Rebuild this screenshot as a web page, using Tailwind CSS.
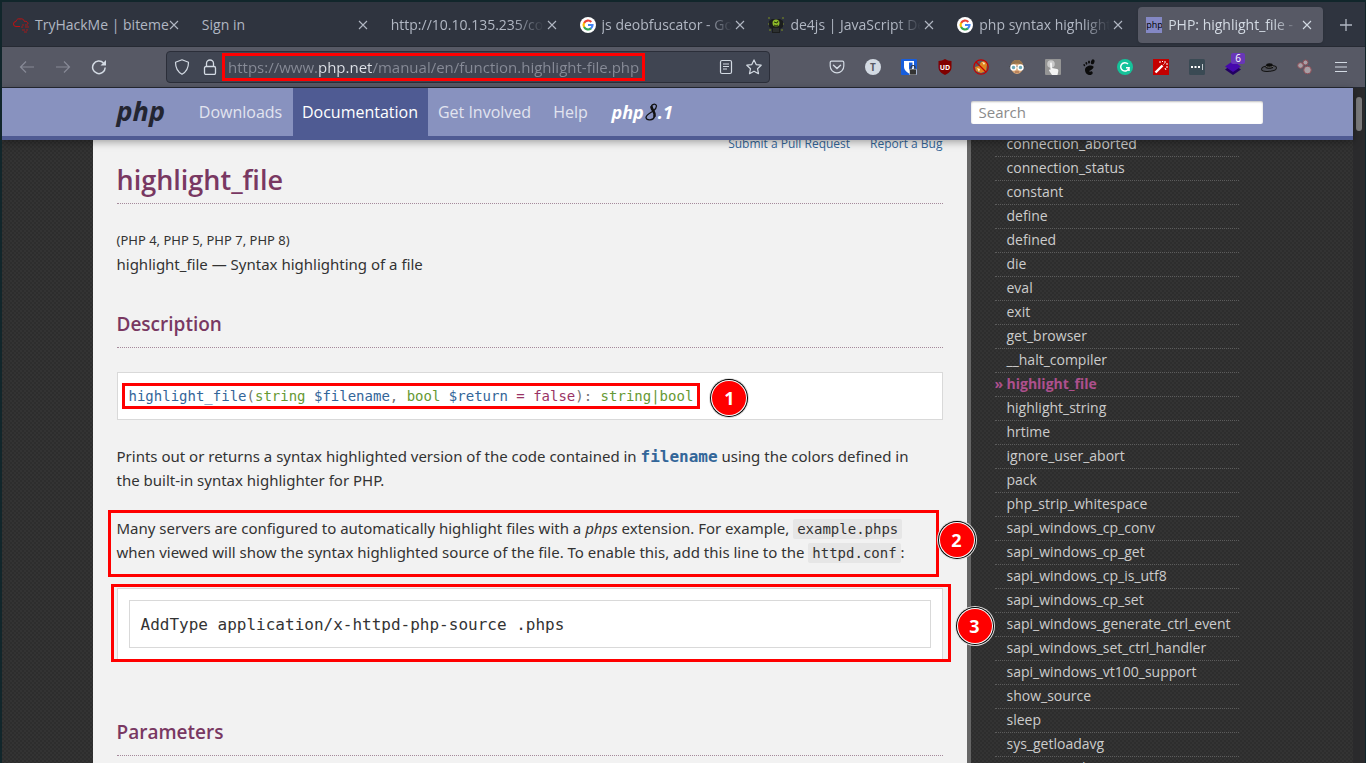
<!DOCTYPE html>
<html lang="en">
<head>
<meta charset="utf-8">
<title>PHP: highlight_file - Manual</title>
<script src="https://cdn.jsdelivr.net/npm/@tailwindcss/browser@4"></script>
</head>
<body class="h-screen overflow-hidden bg-[#11262b] pl-[2px] pt-[2px] pr-px font-['Open_Sans','Noto_Sans',sans-serif]">
<svg class="hidden">
  <symbol id="x" viewBox="0 0 12 12"><path d="M2 2l8 8M10 2l-8 8" stroke="currentColor" stroke-width="1.1" fill="none"/></symbol>
  <symbol id="g" viewBox="0 0 16 16"><circle cx="8" cy="8" r="8" fill="#fff"/><g fill="none" stroke-width="2.2"><path d="M4.1 5.9A4.5 4.5 0 0 1 11.3 4.9" stroke="#ea4335"/><path d="M4.2 10.3A4.5 4.5 0 0 1 4.2 5.7" stroke="#fbbc05"/><path d="M11 11.4A4.5 4.5 0 0 1 4.1 10.1" stroke="#34a853"/><path d="M8 8h4.5A4.5 4.5 0 0 1 10.8 11.5" stroke="#4285f4"/></g></symbol>
</svg>
<div class="flex h-full flex-col overflow-hidden bg-[#2f343f]">

  <!-- Tab strip -->
  <div class="flex h-11 shrink-0 items-center gap-1 pl-[3px] pt-px text-sm text-[#b1b7c3]">
    <div class="flex h-9 min-w-0 flex-1 items-center gap-1.5 px-2">
      <svg class="size-4 shrink-0" viewBox="0 0 16 16" fill="none" stroke="#c11111"><path d="M7 9.500H3a2.500 2.500 0 0 1 0-5A3 3 0 0 1 7 2a3.500 3.500 0 0 1 4.500 2.500A2.500 2.500 0 0 1 15 7"/><path d="M9 8h2M12 8h3M8 10h2M12 10h4M9 13h3M13 13h2M11 15h3" stroke-width=".8"/></svg>
      <span class="min-w-0 flex-1 whitespace-nowrap">TryHackMe | biteme</span>
      <button class="grid size-4 shrink-0 place-items-center" aria-label="Close tab"><svg class="size-3"><use href="#x"/></svg></button>
    </div>
    <div class="flex h-9 min-w-0 flex-1 items-center gap-1.5 px-2">
      <span class="min-w-0 flex-1 whitespace-nowrap">Sign in</span>
      <button class="grid size-4 shrink-0 place-items-center" aria-label="Close tab"><svg class="size-3"><use href="#x"/></svg></button>
    </div>
    <div class="flex h-9 min-w-0 flex-1 items-center px-2">
      <span class="min-w-0 flex-1 overflow-hidden whitespace-nowrap mask-r-from-80% mask-r-to-100%">http://10.10.135.235/con</span>
      <button class="grid size-4 shrink-0 place-items-center" aria-label="Close tab"><svg class="size-3"><use href="#x"/></svg></button>
    </div>
    <div class="flex h-9 min-w-0 flex-1 items-center px-2">
      <svg class="mr-1.5 size-4 shrink-0"><use href="#g"/></svg>
      <span class="min-w-0 flex-1 overflow-hidden whitespace-nowrap mask-r-from-80% mask-r-to-100%">js deobfuscator - Go</span>
      <button class="grid size-4 shrink-0 place-items-center" aria-label="Close tab"><svg class="size-3"><use href="#x"/></svg></button>
    </div>
    <div class="flex h-9 min-w-0 flex-1 items-center px-2">
      <svg class="mr-1.5 size-4 shrink-0" viewBox="0 0 16 16"><path d="M1 4l3-2h8l3 2v6l-3 2v4H4v-4l-3-2z" fill="#1b1d1d"/><circle cx="8" cy="6" r="3.500" fill="#8db92a"/><path d="M6 5l3 1 1-2M6 8l2 1 2-1" stroke="#26330b" fill="none"/><path d="M0 1h2M14 1h2M0 7h1M15 7h1M1 13h2M13 13h2" stroke="#7c8f22"/><path d="M6 11v4M8 11v4M10 11v4" stroke="#3f4343"/></svg>
      <span class="min-w-0 flex-1 overflow-hidden whitespace-nowrap mask-r-from-80% mask-r-to-100%">de4js | JavaScript De</span>
      <button class="grid size-4 shrink-0 place-items-center" aria-label="Close tab"><svg class="size-3"><use href="#x"/></svg></button>
    </div>
    <div class="flex h-9 min-w-0 flex-1 items-center px-2">
      <svg class="mr-1.5 size-4 shrink-0"><use href="#g"/></svg>
      <span class="min-w-0 flex-1 overflow-hidden whitespace-nowrap mask-r-from-80% mask-r-to-100%">php syntax highlight</span>
      <button class="grid size-4 shrink-0 place-items-center" aria-label="Close tab"><svg class="size-3"><use href="#x"/></svg></button>
    </div>
    <div class="flex h-9 min-w-0 flex-1 items-center rounded bg-[#575965] px-2 text-[#d3dae3] shadow">
      <span class="mr-1.5 grid size-4 shrink-0 place-items-center overflow-hidden bg-[#8488c4] text-[9px] leading-none text-black">php</span>
      <span class="min-w-0 flex-1 overflow-hidden whitespace-nowrap mask-r-from-80% mask-r-to-100%">PHP: highlight_file -</span>
      <button class="grid size-4 shrink-0 place-items-center" aria-label="Close tab"><svg class="size-3"><use href="#x"/></svg></button>
    </div>
    <button class="grid h-9 w-[38px] shrink-0 place-items-center" aria-label="New tab"><svg class="size-3" viewBox="0 0 12 12"><path d="M6 0v12M0 6h12" stroke="currentColor" stroke-width="1.300"/></svg></button>
  </div>

  <!-- Toolbar -->
  <div class="flex h-[42px] shrink-0 items-center border-y border-[#262a33] bg-[#575965] pl-[7px] pr-1.5 text-[#d3dae3]">
    <button class="grid h-9 w-9 shrink-0 place-items-center text-[#878a96]" aria-label="Back"><svg class="size-4" viewBox="0 0 16 16" fill="none" stroke="currentColor" stroke-width="1.200"><path d="M15 8H1.500M7 2.500L1.500 8 7 13.500"/></svg></button>
    <button class="grid h-9 w-9 shrink-0 place-items-center text-[#878a96]" aria-label="Forward"><svg class="size-4" viewBox="0 0 16 16" fill="none" stroke="currentColor" stroke-width="1.200"><path d="M1 8h13.500M9 2.500L14.500 8 9 13.500"/></svg></button>
    <button class="grid h-9 w-9 shrink-0 place-items-center" aria-label="Reload"><svg class="size-4" viewBox="0 0 16 16" fill="none" stroke="currentColor" stroke-width="1.500"><path d="M14.200 8.500A6.300 6.300 0 1 1 12.500 4"/><path d="M15 1v5.500H9.500z" fill="currentColor" stroke="none"/></svg></button>
    <div class="mx-[49px] flex h-8 flex-1 items-center rounded border border-[#2b2e39] bg-[#404552] pr-px">
      <svg class="ml-[7px] size-4 shrink-0" viewBox="0 0 16 16" fill="none" stroke="currentColor" stroke-width="1.200"><path d="M8 .8l6.500 2.500c0 6-2 9.500-6.500 12-4.500-2.500-6.500-6-6.500-12z" stroke-linejoin="round"/></svg>
      <svg class="ml-3 size-4 shrink-0" viewBox="0 0 16 16" fill="none" stroke="currentColor" stroke-width="1.300"><rect x="2.500" y="7.500" width="11" height="8" rx="1.500"/><path d="M4.500 7.500V4.500a3.500 3.500 0 0 1 7 0v3"/></svg>
      <div class="ml-1 h-7 w-[423px] shrink-0 border-3 border-[#f00] pl-[3px]">
        <input aria-label="Address" value="https://www.php.net/manual/en/function.highlight-file.php" class="block h-full w-full bg-[linear-gradient(to_right,#878b97_90px,#e0e4ea_90px,#e0e4ea_144px,#878b97_144px)] bg-clip-text text-[15px] text-transparent outline-none">
      </div>
      <span class="flex-1"></span>
      <button class="grid size-7 place-items-center" aria-label="Reader view"><svg class="size-4" viewBox="0 0 16 16" fill="none" stroke="currentColor" stroke-width="1.200"><rect x="2.500" y="1.500" width="11" height="13" rx="1.500"/><path d="M5 5h6M5 7.500h6M5 10h4"/></svg></button>
      <button class="grid size-7 place-items-center" aria-label="Bookmark"><svg class="size-4" viewBox="0 0 16 16" fill="none" stroke="currentColor" stroke-width="1.200" stroke-linejoin="round"><path d="M8 .9l2.200 4.700 5 .6-3.700 3.500 1 5L8 12.200l-4.500 2.500 1-5L.8 6.200l5-.6z"/></svg></button>
    </div>
    <button class="grid h-9 w-9 shrink-0 place-items-center" aria-label="Pocket"><svg class="size-4" viewBox="0 0 16 16" fill="none" stroke="currentColor" stroke-width="1.200"><path d="M2.500 2.200h11c.8 0 1.300.5 1.300 1.300V7a6.800 6.800 0 0 1-13.600 0V3.500c0-.8.500-1.300 1.300-1.300z"/><path d="M4.500 6.200L8 9.500l3.500-3.300" stroke-width="1.500" stroke-linecap="round"/></svg></button>
    <button class="grid h-9 w-9 shrink-0 place-items-center" aria-label="Account"><span class="grid size-4 place-items-center rounded-full bg-[#d3dae3] text-[10px] font-bold leading-none text-[#575965]">T</span></button>
    <button class="grid h-9 w-9 shrink-0 place-items-center" aria-label="Bitwarden"><svg class="size-4" viewBox="0 0 16 16"><rect width="16" height="16" rx="1" fill="#175ddc"/><path d="M3 2h10v6c0 3-2.500 5-5 6.500C5.500 13 3 11 3 8z" fill="#fff"/><path d="M8 3.500h3.500V8c0 1.500-1.500 3-3.500 4z" fill="#175ddc"/><rect x="8.500" y="10" width="7" height="6" rx="1" fill="#333" stroke="#fff" stroke-width=".6"/><path d="M10 10V8.500a2 2 0 0 1 4 0V10" fill="none" stroke="#333" stroke-width="1.200"/></svg></button>
    <button class="grid h-9 w-9 shrink-0 place-items-center" aria-label="uBlock Origin"><span class="relative grid size-4 place-items-center"><svg class="absolute size-4" viewBox="0 0 16 16"><path d="M8 0c2 1.300 4 2 6.500 2v6c0 4-2.500 6-6.500 8-4-2-6.500-4-6.500-8V2C4 2 6 1.300 8 0z" fill="#800000"/></svg><span class="relative text-[7px] font-bold leading-none text-white">UD</span></span></button>
    <button class="grid h-9 w-9 shrink-0 place-items-center" aria-label="Cookie blocker"><svg class="size-4" viewBox="0 0 16 16"><path d="M2 8l4-1 2-4 4-1 2 3-1 7-5 2-5-2z" fill="#e0861f"/><path d="M9 3l3 1-1 2zM4 9l3 1-1 3z" fill="#fff0cf"/><circle cx="8" cy="8" r="7.200" fill="none" stroke="#c50000" stroke-width="1.200"/><path d="M3 3l10 10" stroke="#c50000" stroke-width="1.200"/></svg></button>
    <button class="grid h-9 w-9 shrink-0 place-items-center" aria-label="User agent"><svg class="size-4" viewBox="0 0 16 16"><path d="M2 8c0-4 2-7 6-7s6 3 6 7-3 7-6 7-6-3-6-7z" fill="#d9a878"/><path d="M2 6.500C2 3 5 1 8 1s6 2 6 5.500C11 4 5 4 2 6.500z" fill="#95734c"/><path d="M0 7.500h16" stroke="#4b4b4b"/><circle cx="4.500" cy="8.500" r="2.500" fill="#6fa9b8" stroke="#fff" stroke-width="1.500"/><circle cx="11.500" cy="8.500" r="2.500" fill="#6fa9b8" stroke="#fff" stroke-width="1.500"/><path d="M6 13h4" stroke="#9b5f42"/></svg></button>
    <button class="grid h-9 w-9 shrink-0 place-items-center" aria-label="Click to play"><svg class="size-4" viewBox="0 0 16 16"><rect width="16" height="16" rx="1" fill="#959595"/><circle cx="6" cy="5" r="3.800" fill="#c9c9c9"/><path d="M5 4.500c0-1.500 2-1.500 2 0V9l5 1c1 .2 1.500 1 1.300 2l-.8 4H7L4 11.500c0-1 1-1.200 1.500-.5z" fill="#f4f4f4"/></svg></button>
    <button class="grid h-9 w-9 shrink-0 place-items-center" aria-label="GNOME extensions"><svg class="size-4" viewBox="0 0 16 16" fill="#0b0b0b"><ellipse cx="11.700" cy="2.800" rx="1.700" ry="2.500" transform="rotate(20 11.700 2.800)"/><ellipse cx="8" cy="3" rx="1" ry="1.600"/><ellipse cx="5.400" cy="4.300" rx=".9" ry="1.400" transform="rotate(-15 5.400 4.300)"/><ellipse cx="3.300" cy="6.200" rx=".8" ry="1.200" transform="rotate(-25 3.300 6.200)"/><path d="M12.500 7.500C10 5.500 4 7 4 11c0 3 2.500 5 5 5s3.500-2.500 2-3.500c-1-.7-1.500.5-2.500 0-1.500-1 4.500-1.500 4-5z"/></svg></button>
    <button class="grid h-9 w-9 shrink-0 place-items-center" aria-label="Grammarly"><svg class="size-4" viewBox="0 0 16 16"><circle cx="8" cy="8" r="8" fill="#15c39a"/><path d="M11 5a4.200 4.200 0 1 0 1 3.800H9M12 8.500V12" fill="none" stroke="#fff" stroke-width="1.500"/></svg></button>
    <button class="grid h-9 w-9 shrink-0 place-items-center" aria-label="Magic wand"><svg class="size-4" viewBox="0 0 16 16"><rect width="16" height="16" fill="#c40000"/><path d="M2.500 13.500L9.500 6.500" stroke="#fff" stroke-width="2.400"/><path d="M10.500 5.500l1-1M6 3h2M12 2v2M13 8h2M9 2l1 1M13 5h2M12 9l1 2" stroke="#fff"/></svg></button>
    <button class="grid h-9 w-9 shrink-0 place-items-center" aria-label="Password manager"><svg class="size-4" viewBox="0 0 16 16"><rect width="16" height="16" rx="1.500" fill="#3a4a54"/><path d="M2 7h2v2H2zM5.500 7h2v2h-2zM9 7h2v2H9z" fill="#fff"/><path d="M13.500 5v6" stroke="#c6ccd0"/></svg></button>
    <button class="relative grid h-9 w-9 shrink-0 place-items-center" aria-label="Wappalyzer"><svg class="size-4" viewBox="0 0 16 16"><path d="M0 10.500L8 5l8 5.500L8 16z" fill="#220062"/><path d="M0 7.500L8 2l8 5.500L8 13z" fill="#4608ad"/></svg><span class="absolute right-1.5 top-1 rounded-xs bg-[#6837b8] px-1 text-[10px] leading-[11px] text-white">6</span></button>
    <button class="grid h-9 w-9 shrink-0 place-items-center" aria-label="Hat"><svg class="size-4" viewBox="0 0 16 16"><ellipse cx="8" cy="9.500" rx="7.500" ry="2.800" fill="#4d4f58" stroke="#151515" transform="rotate(-6 8 9.500)"/><path d="M4.500 9l1-4c2-1 4-1 6 0L12 9c-2 1-6 1-7.500 0z" fill="#0c0c0c"/><path d="M5 7.500c2 1 5 1 7-.3" stroke="#666" fill="none"/></svg></button>
    <button class="grid h-9 w-9 shrink-0 place-items-center" aria-label="Containers"><svg class="size-4" viewBox="0 0 16 16" fill="#a8a0a6" stroke="#8f4f58"><circle cx="3.500" cy="6.500" r="2.800"/><circle cx="8.500" cy="3.500" r="2.500"/><circle cx="10.500" cy="11" r="3.800"/></svg></button>
    <button class="grid h-9 w-9 shrink-0 place-items-center" aria-label="Menu"><svg class="h-3 w-3" viewBox="0 0 12 12"><path d="M0 1.500h12M0 6h12M0 10.500h12" stroke="currentColor" stroke-width="1.200"/></svg></button>
  </div>

  <!-- Page viewport -->
  <div class="flex min-h-0 flex-1">
    <div class="flex min-w-0 flex-1 flex-col bg-[#333] bg-[repeating-conic-gradient(#2d2d2d_0_25%,#333_0_50%)] bg-[length:4px_4px]">
      <nav class="relative z-10 h-[52px] shrink-0 border-b-4 border-[#4f5b93] bg-[#8892bf] shadow-[0_2px_8px_rgba(0,0,0,0.35)]">
        <div class="mx-auto flex h-full max-w-[1170px] items-center text-base text-[#e2e4ef]">
          <a href="#" class="w-24 pl-6 pb-1 text-[27px] font-bold italic leading-none text-[#232531]">php</a>
          <a href="#" class="flex h-full w-[104px] items-center justify-center">Downloads</a>
          <a href="#" class="flex h-full w-[135px] items-center justify-center bg-[#4f5b93] text-white">Documentation</a>
          <a href="#" class="flex h-full w-[114px] items-center justify-center">Get Involved</a>
          <a href="#" class="flex h-full w-[58px] items-center justify-center">Help</a>
          <a href="#" class="flex h-full items-center pl-3 text-[18px] font-bold italic text-white">php<svg class="h-[18px] w-3.5" viewBox="0 0 14 18" fill="none" stroke="#111" stroke-linecap="round"><path d="M12.500 3C12 0 7 1 7.500 4.500c.5 3 4.500 5 3 9C9.500 17.500 2.500 18 2 14.500 2 12 6 10 8.500 8.500 10.500 7 12.500 6 12.500 3" stroke-width="1.300"/><path d="M7.500 4c.5 3.500 4 5 3 9" stroke-width="2.600"/></svg>.1</a>
          <input type="text" placeholder="Search" aria-label="Search" class="ml-auto h-[23px] w-[292px] rounded-xs bg-white px-2 text-[15px] text-[#333] shadow-[inset_0_1px_2px_rgba(0,0,0,0.25)] outline-none placeholder:text-[#8b8b8b]">
        </div>
      </nav>
      <div class="mx-auto flex min-h-0 w-full max-w-[1170px] flex-1 overflow-hidden">
        <main class="-mt-2 min-w-0 flex-1 self-start bg-[#f2f2f2] px-6 font-['Noto_Sans',sans-serif] text-[15px] leading-6 text-[#333]">
          <div class="flex justify-end gap-5 font-['Open_Sans',sans-serif] text-xs leading-6 text-[#369]"><a href="#">Submit a Pull Request</a><a href="#">Report a Bug</a></div>
          <h1 class="h-12 border-b border-dotted border-[#a58a9b] font-['Open_Sans',sans-serif] text-[27px] font-semibold leading-[48px] text-[#793862]">highlight_file</h1>
          <p class="mt-6 text-[13px] leading-6">(PHP 4, PHP 5, PHP 7, PHP 8)</p>
          <p>highlight_file — Syntax highlighting of a file</p>
          <h2 class="mt-6 h-12 border-b border-dotted border-[#a58a9b] font-['Open_Sans',sans-serif] text-[19px] font-semibold leading-[48px] text-[#793862]">Description</h2>
          <div class="mt-6 flex h-12 items-center border border-[#d9d9d9] bg-white pl-1">
            <code class="border-3 border-[#f00] px-1 font-['DejaVu_Sans_Mono',monospace] text-[14px] leading-5 text-[#737373]"><span class="text-[#369]">highlight_file</span>(<span class="text-[#693]">string</span> <span class="text-[#369]">$filename</span>, <span class="text-[#693]">bool</span> <span class="text-[#369]">$return</span><span class="text-[#936]"> = false</span>): <span class="text-[#693]">string|bool</span></code>
            <span class="ml-3 mt-1 grid size-[34px] place-items-center rounded-full bg-[#f00] font-['Open_Sans',sans-serif] text-lg font-bold text-white shadow-[0_0_0_1px_#fff,0_0_0_2px_#000,0_0_0_3px_#ddd]">1</span>
          </div>
          <p class="mt-6 whitespace-nowrap">Prints out or returns a syntax highlighted version of the code contained in <code class="font-['DejaVu_Sans_Mono',monospace] text-base font-bold leading-none text-[#369]">filename</code> using the colors defined in<br>the built-in syntax highlighter for PHP.</p>
          <div class="relative mt-6">
            <p class="whitespace-nowrap">Many servers are configured to automatically highlight files with a <em>phps</em> extension. For example, <code class="rounded-xs bg-[#e6e6e6] px-1 py-0.5 font-['DejaVu_Sans_Mono',monospace] text-sm leading-none">example.phps</code><br>when viewed will show the syntax highlighted source of the file. To enable this, add this line to the <code class="rounded-xs bg-[#e6e6e6] px-1 py-0.5 font-['DejaVu_Sans_Mono',monospace] text-sm leading-none">httpd.conf</code>:</p>
            <span class="absolute -left-[9px] right-1 -top-1.5 h-[67px] border-3 border-[#f00]"></span>
            <span class="absolute -right-[31px] top-[7px] grid size-[34px] place-items-center rounded-full bg-[#f00] font-['Open_Sans',sans-serif] text-lg font-bold text-white shadow-[0_0_0_1px_#fff,0_0_0_2px_#000,0_0_0_3px_#ddd]">2</span>
          </div>
          <div class="relative mt-6 border border-[#d9d9d9] bg-white p-[11px]">
            <pre class="h-12 border border-[#d9d9d9] pl-[11px] font-['DejaVu_Sans_Mono',monospace] text-base leading-[48px]">AddType application/x-httpd-php-source .phps</pre>
            <span class="absolute -bottom-[3px] -left-[7px] -right-[9px] -top-[5px] border-3 border-[#f00]"></span>
            <span class="absolute -right-[50px] top-5 grid size-[34px] place-items-center rounded-full bg-[#f00] font-['Open_Sans',sans-serif] text-lg font-bold text-white shadow-[0_0_0_1px_#fff,0_0_0_2px_#000,0_0_0_3px_#ddd]">3</span>
          </div>
          <h2 class="mt-12 h-12 border-b border-dotted border-[#a58a9b] font-['Open_Sans',sans-serif] text-[19px] font-semibold leading-[48px] text-[#793862]">Parameters</h2>
          <div class="h-12"></div>
        </main>
        <aside class="w-[296px] shrink-0 border-l-4 border-[#666] px-6">
          <ul class="-mt-[7px] text-sm text-[#ccc] *:h-6 *:border-b *:border-dotted *:border-[#5c5c5c] *:pl-3 *:leading-[22px]">
            <li><a href="#">connection_aborted</a></li>
            <li><a href="#">connection_status</a></li>
            <li><a href="#">constant</a></li>
            <li><a href="#">define</a></li>
            <li><a href="#">defined</a></li>
            <li><a href="#">die</a></li>
            <li><a href="#">eval</a></li>
            <li><a href="#">exit</a></li>
            <li><a href="#">get_browser</a></li>
            <li><a href="#">__halt_compiler</a></li>
            <li class="relative font-bold text-[#ae508d]"><span class="absolute left-0">»</span><a href="#">highlight_file</a></li>
            <li><a href="#">highlight_string</a></li>
            <li><a href="#">hrtime</a></li>
            <li><a href="#">ignore_user_abort</a></li>
            <li><a href="#">pack</a></li>
            <li><a href="#">php_strip_whitespace</a></li>
            <li><a href="#">sapi_windows_cp_conv</a></li>
            <li><a href="#">sapi_windows_cp_get</a></li>
            <li><a href="#">sapi_windows_cp_is_utf8</a></li>
            <li><a href="#">sapi_windows_cp_set</a></li>
            <li><a href="#">sapi_windows_generate_ctrl_event</a></li>
            <li><a href="#">sapi_windows_set_ctrl_handler</a></li>
            <li><a href="#">sapi_windows_vt100_support</a></li>
            <li><a href="#">show_source</a></li>
            <li><a href="#">sleep</a></li>
            <li><a href="#">sys_getloadavg</a></li>
            <li><a href="#">time_nanosleep</a></li>
          </ul>
        </aside>
      </div>
    </div>
    <div class="w-3 shrink-0 bg-[#2a2a2c] px-[3px] pt-[9px]"><div class="h-[34px] rounded-full bg-[#7b7b7c]"></div></div>
  </div>
</div>
</body>
</html>
